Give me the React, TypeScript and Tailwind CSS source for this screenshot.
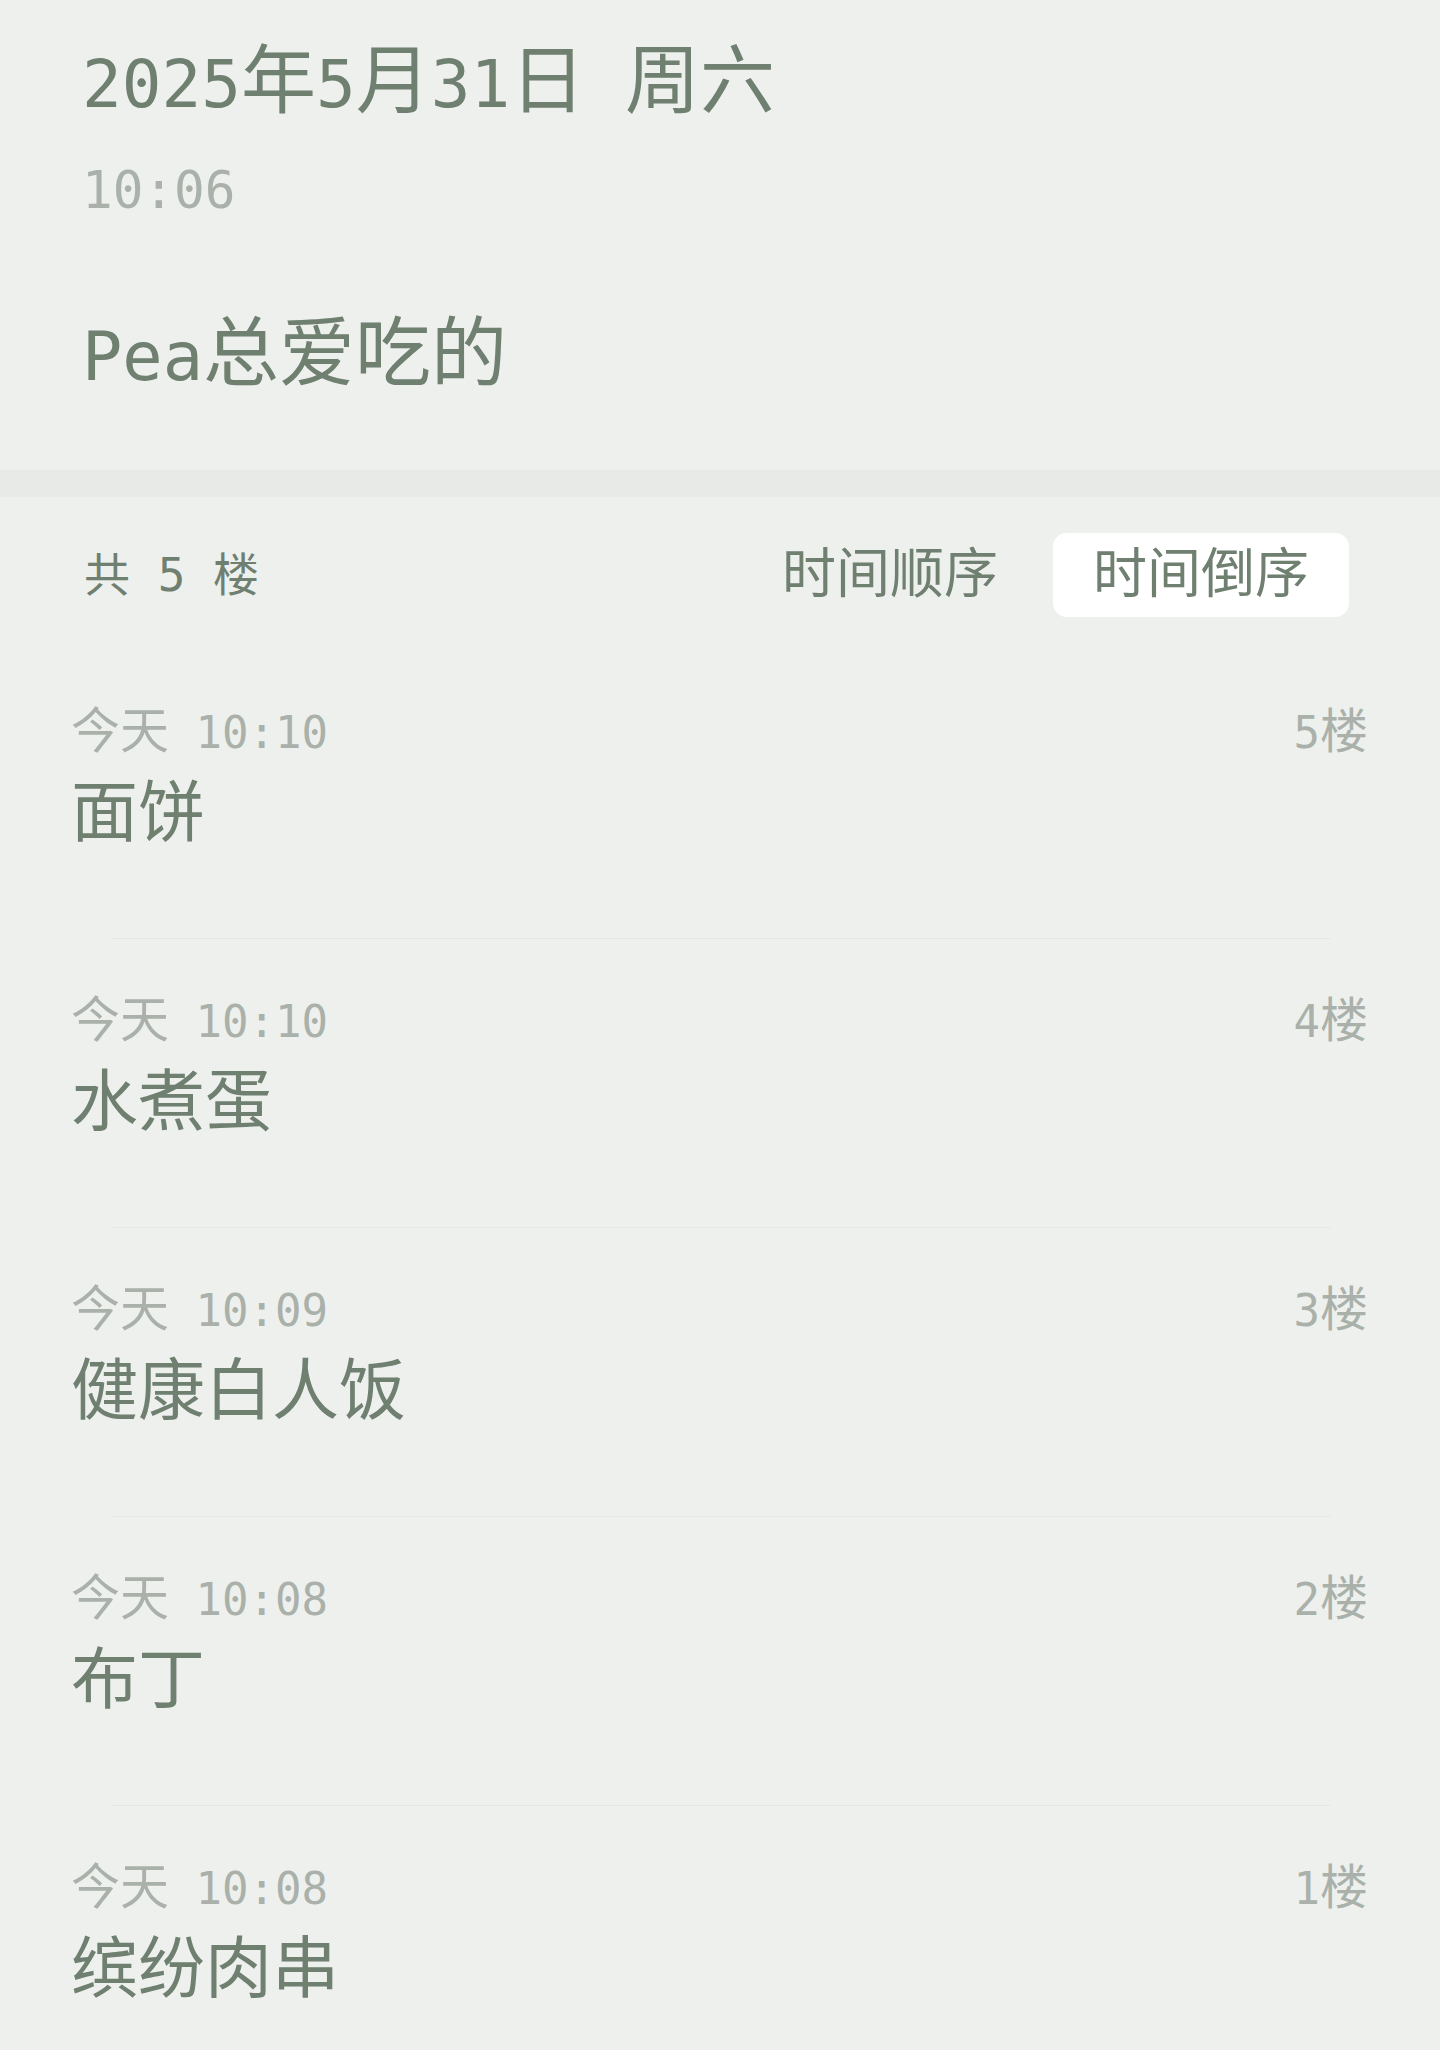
import React from "react";

const FONT = { fontFamily: '"DejaVu Sans Mono", "Noto Sans CJK SC", monospace' };

const isCJK = (ch: string) => /[\u2e80-\u9fff\uf900-\ufaff\uff00-\uffef]/.test(ch);

function Mixed({ text, latin, cjk }: { text: string; latin: string; cjk: string }) {
  const runs: { s: string; c: boolean }[] = [];
  for (const ch of Array.from(text)) {
    const c = isCJK(ch);
    const last = runs[runs.length - 1];
    if (last && last.c === c) last.s += ch;
    else runs.push({ s: ch, c });
  }
  return (
    <>
      {runs.map((r, i) => (
        <span key={i} className={r.c ? cjk : latin}>
          {r.s}
        </span>
      ))}
    </>
  );
}

const items = [
  { time: "今天 10:10", floor: "5楼", text: "面饼" },
  { time: "今天 10:10", floor: "4楼", text: "水煮蛋" },
  { time: "今天 10:09", floor: "3楼", text: "健康白人饭" },
  { time: "今天 10:08", floor: "2楼", text: "布丁" },
  { time: "今天 10:08", floor: "1楼", text: "缤纷肉串" },
];

export default function App() {
  return (
    <div
      className="w-[1440px] h-[2050px] overflow-hidden bg-[#eef0ed] text-[#6f7f70]"
      style={FONT}
    >
      {/* Header section */}
      <div className="pl-[82px] pt-[46px] pb-[81px]">
        <div className="h-[70px] text-[66px] leading-[70px] whitespace-pre">
          <Mixed text="2025年5月31日 周六" latin="text-[66px]" cjk="text-[75px]" />
        </div>
        <div className="mt-[50px] h-[50px] text-[51px] leading-[50px] text-[#a9b1aa]">10:06</div>
        <div className="mt-[103px] h-[70px] text-[67px] leading-[70px] whitespace-pre">
          <Mixed text="Pea总爱吃的" latin="text-[67px]" cjk="text-[76px]" />
        </div>
      </div>

      <div className="h-[27px] bg-[#e7eae6]" />

      {/* Replies */}
      <div>
        <div className="flex items-center justify-between pt-[36px] pl-[84px] pr-[91px]">
          <div className="text-[46px] leading-[46px] whitespace-pre">共 5 楼</div>
          <div className="flex items-center gap-[15px]">
            <div className="h-[84px] px-[40px] flex items-center text-[54px] leading-[54px] rounded-[14px]">
              时间顺序
            </div>
            <div className="h-[84px] px-[40px] flex items-center text-[54px] leading-[54px] rounded-[14px] bg-white">
              时间倒序
            </div>
          </div>
        </div>

        <div className="mt-[33px]">
          {items.map((it, i) => (
            <div key={i}>
              <div className="pt-[59px] pl-[71px] pr-[72px]">
                <div className="flex justify-between h-[45px] text-[44px] leading-[45px] text-[#a9b1aa]">
                  <div className="whitespace-pre">
                    <Mixed text={it.time} latin="text-[44px]" cjk="text-[49px]" />
                  </div>
                  <div className="whitespace-pre">
                    <Mixed text={it.floor} latin="text-[44px]" cjk="text-[48px]" />
                  </div>
                </div>
                <div className="mt-[26px] h-[66px] text-[67px] leading-[66px]">{it.text}</div>
                <div className="h-[92px]" />
              </div>
              <div className="ml-[111px] mr-[110px] h-px bg-[#e4e7e3]" />
            </div>
          ))}
        </div>
      </div>
    </div>
  );
}
